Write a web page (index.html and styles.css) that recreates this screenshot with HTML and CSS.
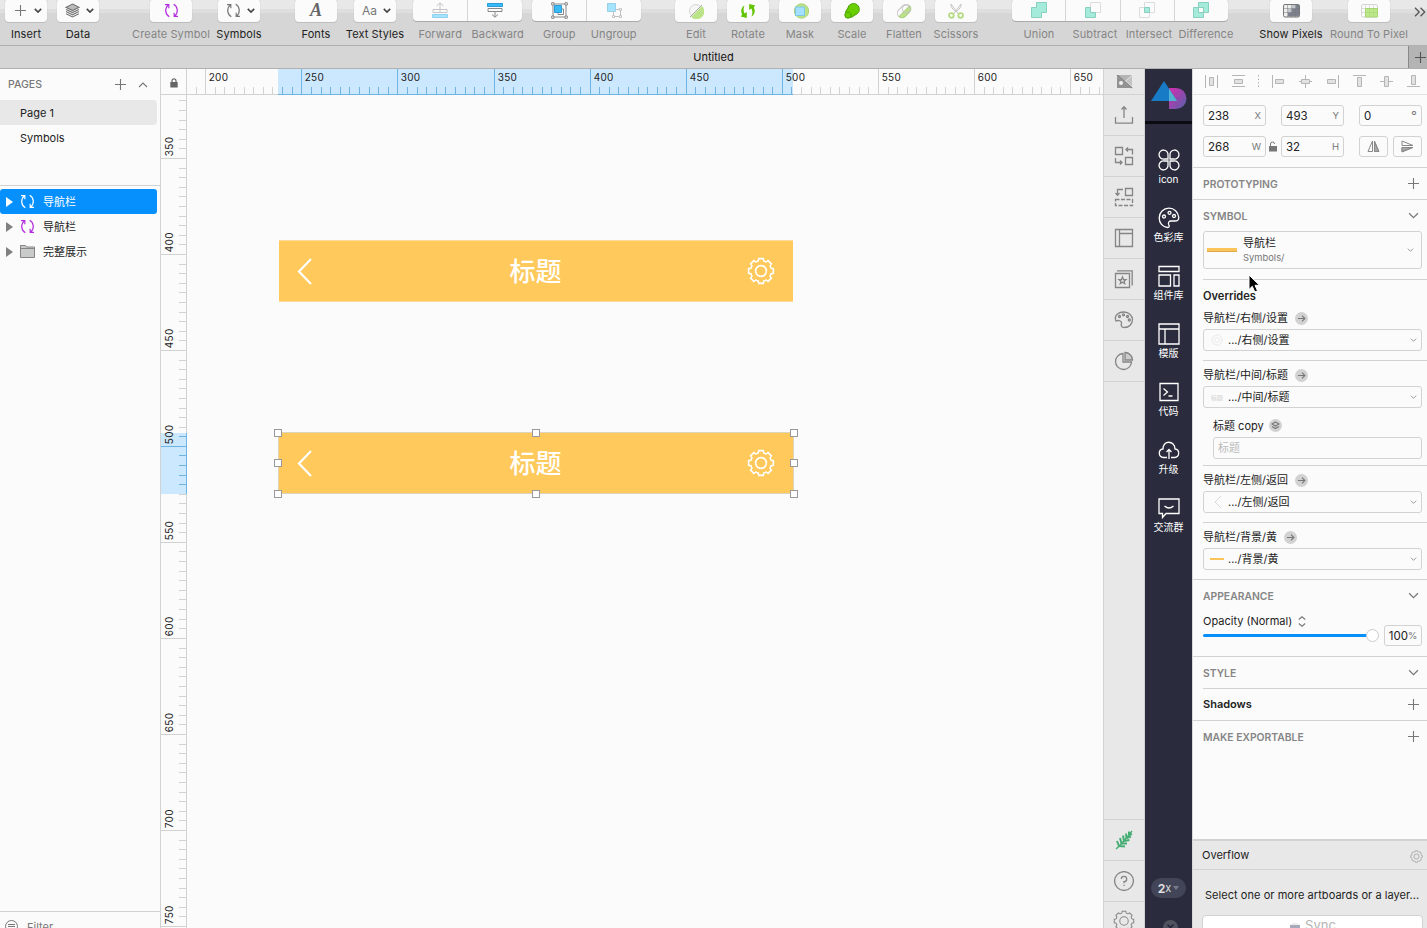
FILE: index.html
```html
<!DOCTYPE html>
<html lang="zh-CN">
<head>
    <meta charset="UTF-8">
    <meta name="viewport" content="width=device-width, initial-scale=1.0">
    <title>Untitled</title>
    <link rel="stylesheet" href="styles.css">
</head>
<body>
    <!-- Shared icons -->
    <svg class="sprite" xmlns="http://www.w3.org/2000/svg">
        <symbol id="gear" viewBox="-14 -14 28 28">
            <g id="half">
                <path id="t" d="M-4.1 -9.9Q-2.9 -9.4 -2.6 -10.6L-2.3 -12.4H2.3L2.6 -10.6Q2.9 -9.4 4.1 -9.9"/>
                <use href="#t" transform="rotate(45)"/>
                <use href="#t" transform="rotate(90)"/>
                <use href="#t" transform="rotate(135)"/>
            </g>
            <use href="#half" transform="rotate(180)"/>
            <circle r="5.4"/>
        </symbol>
        <symbol id="sync" viewBox="0 0 14 14">
            <path d="M5 12.8C1.2 10.8 .2 5.200 4 1.800M1 1.500H4.500V5M9 1.200C12.800 3.200 13.800 8.800 10 12.200M13 12.500H9.500V9"/>
        </symbol>
        <symbol id="down" viewBox="0 0 10 6"><path d="M1 1L5 5L9 1"/></symbol>
        <symbol id="plus" viewBox="0 0 11 11"><path d="M5.500 0V11M0 5.500H11"/></symbol>
        <symbol id="layers" viewBox="0 0 14 14">
            <path d="M7 1L13 4L7 7L1 4Z" fill="#bbb"/>
            <path d="M1 6L7 9L13 6M1 8L7 11L13 8M1 10L7 13L13 10"/>
        </symbol>
        <symbol id="stack" viewBox="0 0 9 9"><path d="M4.500 1L8 3L4.500 5L1 3ZM1 5.500L4.500 7.500L8 5.500"/></symbol>
        <symbol id="arrow" viewBox="0 0 13 13">
            <circle cx="6.500" cy="6.500" r="6.500" fill="#d2d2d2" stroke="none"/>
            <path d="M3 6.500H10M7 3.700L9.900 6.500L7 9.300"/>
        </symbol>
    </svg>

    <!-- Toolbar -->
    <header class="toolbar">
        <div class="tool on">
            <div class="btn with-menu"><svg class="ic g" width="11" height="11"><use href="#plus"/></svg><svg class="ic dk" width="8" height="5"><use href="#down"/></svg></div>
            <span>Insert</span>
        </div>
        <div class="tool on">
            <div class="btn with-menu"><svg class="ic g" width="15" height="15"><use href="#layers"/></svg><svg class="ic dk" width="8" height="5"><use href="#down"/></svg></div>
            <span>Data</span>
        </div>
        <div class="tool m-create">
            <div class="btn"><svg class="ic purple" width="15" height="15"><use href="#sync"/></svg></div>
            <span>Create Symbol</span>
        </div>
        <div class="tool on m-symbols">
            <div class="btn with-menu"><svg class="ic g" width="15" height="15"><use href="#sync"/></svg><svg class="ic dk" width="8" height="5"><use href="#down"/></svg></div>
            <span>Symbols</span>
        </div>
        <div class="tool on m-fonts">
            <div class="btn"><i class="font-a">A</i></div>
            <span>Fonts</span>
        </div>
        <div class="tool on m-sm">
            <div class="btn with-menu"><b class="aa">Aa</b><svg class="ic dk" width="8" height="5"><use href="#down"/></svg></div>
            <span>Text Styles</span>
        </div>
        <div class="segment m-sm">
            <div class="cells">
                <div class="cell"><svg width="16" height="16"><path d="M8 10V1M4.500 4L8 .8L11.500 4M1 7.500H15V10.500H1Z" fill="none" stroke="#c4c4c4"/><path d="M.5 12.500H15.500V15.500H.5Z" fill="#a4e4ff" stroke="#8ed0ee"/></svg></div>
                <div class="cell"><svg width="16" height="16"><path d="M.5 1.500H15.500V4.500H.5Z" fill="#39baf9" stroke="#2b9cd5"/><path d="M1 6.500H15V9.500H1ZM8 9.500V15M5 12.500L8 15.200L11 12.500" fill="none" stroke="#888"/></svg></div>
            </div>
            <div class="labels"><span>Forward</span><span class="push">Backward</span></div>
        </div>
        <div class="segment">
            <div class="cells">
                <div class="cell"><svg width="17" height="17" fill="none" stroke="#888"><path d="M2 2H15V15H2Z"/><path d="M7 7H12.500V12.500H7Z"/><path d="M3.500 3.500H10.500V10.500H3.500Z" fill="#39baf9" stroke="#2b9cd5"/><path d="M.7 .7H3V3H.7ZM14 .7H16.300V3H14ZM.7 14H3V16.300H.7ZM14 14H16.300V16.300H14Z" fill="#fff"/></svg></div>
                <div class="cell"><svg width="17" height="17" fill="none" stroke="#c2c2c2"><path d="M7.500 7.500H14.500V14.500H7.500Z"/><path d="M6.500 6.500H8.500V8.500H6.500ZM13.500 6.500H15.500V8.500H13.500ZM6.500 13.500H8.500V15.500H6.500ZM13.500 13.500H15.500V15.500H13.500Z" fill="#fff"/><path d="M1.500 1.500H9.500V9.500H1.500Z" fill="#a4e4ff" stroke="#9bcfe6"/></svg></div>
            </div>
            <div class="labels"><span>Group</span><span>Ungroup</span></div>
        </div>
        <div class="tool m-edit">
            <div class="btn"><svg width="16" height="16"><circle cx="8" cy="8" r="6.500" fill="#f6f6f6" stroke="#d5d5d5"/><path d="M14 3A7.200 7.200 0 0 1 3 14Z" fill="#bde388"/><path d="M2 14L14 2" stroke="#aaa"/></svg></div>
            <span>Edit</span>
        </div>
        <div class="tool">
            <div class="btn"><svg width="16" height="16" fill="#62c400"><path d="M4.500 2.500C1 4.500 .5 8.500 2.200 11.500L.8 13.500L6.800 15V9L4.500 10.500C3.300 8 3.300 5 4.500 2.500ZM11.500 13.500C15 11.500 15.500 7.500 13.800 4.500L15.200 2.500L9.200 1V7L11.500 5.500C12.700 8 12.700 11 11.500 13.500Z"/></svg></div>
            <span>Rotate</span>
        </div>
        <div class="tool">
            <div class="btn"><svg width="17" height="16"><circle cx="9.500" cy="8" r="7.200" fill="#bde388" stroke="#a9d178"/><path d="M3.500 4H12.500V12.500H3.500Z" fill="#a4e0ff" stroke="#7fc5e4"/></svg></div>
            <span>Mask</span>
        </div>
        <div class="tool">
            <div class="btn"><svg width="16" height="16" fill="#69cf00" stroke="#4b9f0b"><circle cx="9.500" cy="6.300" r="5.800"/><circle cx="6.500" cy="9.500" r="4.800"/><circle cx="4" cy="12" r="3.200"/><circle cx="9.500" cy="6.300" r="5" stroke="none"/></svg></div>
            <span>Scale</span>
        </div>
        <div class="tool">
            <div class="btn"><svg width="16" height="16" fill="none"><g transform="rotate(-45 8 8)" stroke="#c6c6c6"><rect x=".5" y="3.500" width="15" height="9" rx="4.500"/><path d="M1 8.500H15.500Q15 12.500 11 12.500H5Q1 12.500 1 8.500Z" fill="#bde388" stroke="#a9d178"/><circle cx="11" cy="8" r="3.800"/></g></svg></div>
            <span>Flatten</span>
        </div>
        <div class="tool">
            <div class="btn"><svg width="16" height="16" fill="none" stroke="#c4c4c4"><path d="M3 1L10.500 11M13 1L5.500 11M3 1Q2 4 8 9M13 1Q14 4 8 9"/><g stroke="#b4db80" stroke-width="1.800"><circle cx="3.400" cy="12.500" r="2.300"/><circle cx="12.600" cy="12.500" r="2.300"/></g></svg></div>
            <span>Scissors</span>
        </div>
        <div class="segment bool">
            <div class="cells">
                <div class="cell"><svg width="16" height="16"><path d="M5.500 .5H15.500V10.500H10.500V15.500H.5V5.500H5.500Z" fill="#a5ebdc" stroke="#88cfc0"/></svg></div>
                <div class="cell"><svg width="16" height="16"><path d="M5.500 .5H15.500V10.500H5.500Z" fill="none" stroke="#ddd"/><path d="M.5 5.500H5.500V10.500H10.500V15.500H.5Z" fill="#a5ebdc" stroke="#88cfc0"/></svg></div>
                <div class="cell"><svg width="16" height="16"><path d="M5.500 .5H15.500V10.500H5.500ZM.5 5.500H10.500V15.500H.5Z" fill="none" stroke="#ddd"/><path d="M5.500 5.500H10.500V10.500H5.500Z" fill="#a5ebdc" stroke="#88cfc0"/></svg></div>
                <div class="cell"><svg width="16" height="16"><path d="M5.500 .5H15.500V10.500H10.500V15.500H.5V5.500H5.500Z" fill="#a5ebdc" stroke="#88cfc0"/><path d="M5.500 5.500H10.500V10.500H5.500Z" fill="#fbfbfb" stroke="#88cfc0"/></svg></div>
            </div>
            <div class="labels"><span>Union</span><span class="nudge">Subtract</span><span class="nudge">Intersect</span><span class="push-more">Difference</span></div>
        </div>
        <div class="tool on m-pixels">
            <div class="btn"><svg width="17" height="14"><rect x=".5" y=".5" width="16" height="12.500" rx="1.500" fill="#eee"/><path d="M9 1H13V4.500H9ZM5 5H9V8.500H5Z" fill="#c2c6cf"/><path d="M9 4.500H16V12.500H5V8.500H9ZM13 1H16V4.500H13Z" fill="#7d818f"/><path d="M4.500 .5V13M8.500 .5V13M12.500 .5V13M.5 4.500H16.500M.5 8.500H16.500" stroke="#777" stroke-opacity=".5"/><rect x=".5" y=".5" width="16" height="12.500" rx="1.500" fill="none" stroke="#777"/></svg></div>
            <span>Show Pixels</span>
        </div>
        <div class="tool m-round">
            <div class="btn"><svg width="17" height="14"><rect x=".5" y=".5" width="16" height="12.500" rx="1.500" fill="#fbfbfb" stroke="#d4d4d4"/><path d="M4.500 4.500H16.500V13H4.500Z" fill="#bce88a" stroke="#a8d474"/><path d="M4.500 .5V4M8.500 .5V4M12.500 .5V4M.5 4.500H4M.5 8.500H4" stroke="#ddd"/><path d="M8.500 5V13M12.500 5V13M5 8.500H16" stroke="#a8d474" stroke-opacity=".5"/></svg></div>
            <span>Round To Pixel</span>
        </div>
        <svg class="more" width="12" height="10" fill="none" stroke="#555" stroke-width="1.300"><path d="M1 .8L5.200 5L1 9.200M6.500 .8L10.700 5L6.500 9.200"/></svg>
    </header>

    <div class="tabbar">
        <span class="tab">Untitled</span>
        <span class="new-tab"><svg class="ic" width="11" height="11"><use href="#plus"/></svg></span>
    </div>

    <main class="workspace">
        <!-- Pages and layers -->
        <aside class="sidebar">
            <div class="pages">
                <div class="pages-head">
                    <span>PAGES</span>
                    <svg class="ic g" width="11" height="11"><use href="#plus"/></svg>
                    <svg class="ic g flip" width="10" height="6"><use href="#down"/></svg>
                </div>
                <div class="page current">Page 1</div>
                <div class="page">Symbols</div>
            </div>
            <div class="layers">
                <div class="layer selected"><i class="tri"></i><svg class="ic" width="15" height="15"><use href="#sync"/></svg><span>导航栏</span></div>
                <div class="layer"><i class="tri"></i><svg class="ic purple" width="15" height="15"><use href="#sync"/></svg><span>导航栏</span></div>
                <div class="layer"><i class="tri"></i><svg width="15" height="13"><path d="M.5 .5H5.500L6.500 2H14.500V12.500H.5Z" fill="#c9caca" stroke="#858585"/><path d="M.5 3.500H14.500" stroke="#858585"/></svg><span>完整展示</span></div>
            </div>
            <div class="filter"><svg width="13" height="13" fill="none" stroke="#777"><circle cx="6.500" cy="6.500" r="6"/><path d="M3 4.500H10M3 6.500H10M4 8.500H9"/></svg><span>Filter</span></div>
        </aside>

        <!-- Canvas with rulers -->
        <section class="editor">
            <div class="corner"><svg width="8" height="10"><path d="M2 4V2.800A2 2 0 0 1 6 2.800V4" fill="none" stroke="#666" stroke-width="1.200"/><rect x=".3" y="4" width="7.400" height="5.500" rx=".6" fill="#666"/></svg></div>
            <svg class="ruler" id="rulerX" width="916" height="26"></svg>
            <svg class="ruler" id="rulerY" width="26" height="833"></svg>
            <div class="canvas">
                <div class="artwork top">
                    <svg width="15" height="28"><path d="M14 2L2 14.500L14 27"/></svg>
                    <span>标题</span>
                    <svg width="28" height="28"><use href="#gear"/></svg>
                </div>
                <div class="artwork bottom">
                    <svg width="15" height="28"><path d="M14 2L2 14.500L14 27"/></svg>
                    <span>标题</span>
                    <svg width="28" height="28"><use href="#gear"/></svg>
                    <i class="handle n w"></i><i class="handle n c"></i><i class="handle n e"></i>
                    <i class="handle m w"></i><i class="handle m e"></i>
                    <i class="handle s w"></i><i class="handle s c"></i><i class="handle s e"></i>
                </div>
            </div>
        </section>

        <!-- Plugin strip -->
        <nav class="strip">
            <div class="slot first"><svg width="17" height="14"><path d="M1 0H16L9 6Z" fill="#b4b4b4"/><path d="M1 1L15 13H1Z" fill="#929292"/><path d="M16 1V11L10 6Z" fill="#c2c2c2"/><circle cx="5" cy="8" r="2" fill="#f0f0f0"/><path class="slash" d="M1 0L16 13"/></svg></div>
            <div class="slot"><svg width="20" height="20"><path d="M1.500 12V18.200H18.500V12M10 13V2M7.500 4.500L10 1.800L12.500 4.500"/></svg></div>
            <div class="slot"><svg width="20" height="20"><path d="M1.500 1.500H8.500V8.500H1.500ZM11.500 11.500H18.500V18.500H11.500ZM18.500 8.500V3.500H12M14 1.500L12 3.500L14 5.500M1.500 12V16.500H8M6 14.500L8 16.500L6 18.500"/></svg></div>
            <div class="slot"><svg width="20" height="20"><path d="M11.500 1.500H18.500V8.500H11.500ZM9 2.500H3.500V8M1.500 6L3.500 8.200L5.500 6"/><path d="M1.500 12.500H18.500V18.500H1.500Z" stroke-dasharray="4 1.500"/></svg></div>
            <div class="slot"><svg width="20" height="20"><path d="M1.500 1.500H18.500V18.500H1.500ZM5.500 1.500V18.500M5.500 5.500H18.500"/></svg></div>
            <div class="slot"><svg width="20" height="20"><path d="M1.500 4.500H15.500V18.500H1.500ZM3 1.800H18.200V16.500M8.500 8L9.500 10.500L12 10.600L10.100 12.200L10.700 14.700L8.500 13.300L6.300 14.700L6.900 12.200L5 10.600L7.500 10.500Z"/></svg></div>
            <div class="slot"><svg width="20" height="20"><path d="M2 11C-.5 5 5 2 10 2C15 2 18.500 6 18.500 9.500C18.500 14 15 17.500 10.500 17.500C7 17.500 7 15.500 7.500 13.500C8 10.500 4 10 2 11Z"/><circle cx="5.500" cy="6.500" r="1"/><circle cx="9.500" cy="4.800" r="1"/><circle cx="13.500" cy="6.500" r="1"/><circle cx="15.300" cy="10" r="1"/></svg></div>
            <div class="slot"><svg width="20" height="20"><path d="M9 2.500A8 8 0 1 0 17.500 11H9Z"/><path d="M11 1.500V9H18.500A7.500 7.500 0 0 0 11 1.500Z" fill="#ccc"/></svg></div>
            <div class="fill"></div>
            <div class="slot leaf"><svg width="20" height="22"><path d="M2 20Q8 15 18 2" stroke-width="1.300"/><path d="M5 17L3 12M7.500 14.500L6 9M10 12L9 6.500M12.500 9L12 4.500M15 6L15 2.500M5 17L11 17.500M7.500 14.500L13 14.500M10 12L15.500 11M12.500 9L17 7.500M15 6L18 5" stroke-width="2"/></svg></div>
            <div class="slot"><svg width="20" height="20"><circle cx="10" cy="10" r="9.400"/><path d="M7.300 8A2.700 2.700 0 1 1 10 10.700V12.300M10 13.800V15"/></svg></div>
            <div class="slot last"><svg width="22" height="22"><use href="#gear"/></svg></div>
        </nav>

        <!-- Library dock -->
        <nav class="dock">
            <div class="logo"><svg width="36" height="30"><defs><linearGradient id="lg" x1="0" y1="0" x2="1" y2="1"><stop offset="0" stop-color="#d62bb2"/><stop offset="1" stop-color="#5264a8"/></linearGradient></defs><path d="M18 7H25A10.500 10.500 0 0 1 25 28H18Z" fill="url(#lg)"/><path d="M13 0L26 20H0Z" fill="#187bc6"/><path d="M18 7.500L26 20H18Z" fill="#4eb4cf"/></svg></div>
            <div class="entry"><svg width="22" height="22"><path d="M10 10H6A4.500 4.500 0 1 1 10 6ZM12 10V6A4.500 4.500 0 1 1 16 10ZM10 12V16A4.500 4.500 0 1 1 6 12ZM12 12H16A4.500 4.500 0 1 1 12 16Z"/></svg><span>icon</span></div>
            <div class="entry"><svg width="22" height="22"><path d="M11 1.200C5.500 1.200 1.200 5.500 1.200 11C1.200 16 4.500 20 9.500 20.500C11.500 20.500 11.500 19 10.700 17.500C9.900 15.500 11 14 13 14H17C20 14 20.800 12 20.800 10.500C20.300 5 16 1.200 11 1.200Z"/><circle cx="6" cy="9.500" r="1.500"/><circle cx="11.500" cy="5.800" r="1.500"/><circle cx="16" cy="9" r="1.500"/></svg><span>色彩库</span></div>
            <div class="entry"><svg width="22" height="22"><path d="M1 1.500H21V6.500H1ZM1 10H12.500V21H1ZM16 10H21V21H16Z"/></svg><span>组件库</span></div>
            <div class="entry"><svg width="22" height="22"><path d="M1 1H21V21H1ZM1 6H21M7 6V21"/></svg><span>模版</span></div>
            <div class="entry"><svg width="22" height="22"><path d="M2 2.500H20V19.500H2ZM5.500 7.500L9.500 11L5.500 14.500M10.500 15H14.500"/></svg><span>代码</span></div>
            <div class="entry"><svg width="22" height="22"><path d="M9 18.500H5.500C0 18 0 10.500 5 10C4.500 1 17 1 17 10C22 10.500 22 18 16.500 18.500H13M11 20V10.500M8.500 13L11 10.500L13.500 13"/></svg><span>升级</span></div>
            <div class="entry"><svg width="22" height="22"><path d="M1 2H21V16.500H8L4.500 20.500V16.500H1ZM6.500 9Q11 13 15.500 9"/></svg><span>交流群</span></div>
            <div class="scale"><b>2</b>x<i></i></div>
            <div class="close"><svg width="15" height="15"><circle cx="7.500" cy="7.500" r="7.500" fill="#50525f"/><path d="M4.500 4.500L10.500 10.500M10.500 4.500L4.500 10.500" stroke="#23243a" stroke-width="1.500"/></svg></div>
        </nav>

        <!-- Inspector -->
        <aside class="inspector">
            <div class="align">
                <svg width="14" height="14"><path d="M1.500 1V14M13.500 1V14"/><path class="f" d="M5.500 3.500H9.500V11.500H5.500Z"/></svg>
                <svg width="14" height="14"><path d="M1 1.500H14M1 12.500H14"/><path class="f" d="M3.500 5.500H11.500V9.500H3.500Z"/></svg>
                <svg class="dots" width="3" height="14"><path d="M1.500 1V14" stroke-dasharray="1.500 2"/></svg>
                <svg class="after-dots" width="14" height="14"><path d="M1.500 1V14"/><path class="f" d="M4.500 5.500H12.500V9.500H4.500Z"/></svg>
                <svg width="14" height="14"><path d="M7.500 1V14M1 7.500H14"/><path class="f" d="M3.500 5.500H11.500V9.500H3.500Z"/></svg>
                <svg width="14" height="14"><path d="M13.500 1V14"/><path class="f" d="M2.500 5.500H10.500V9.500H2.500Z"/></svg>
                <svg width="14" height="14"><path d="M1 1.500H14"/><path class="f" d="M5.500 3.500H9.500V12.500H5.500Z"/></svg>
                <svg width="14" height="14"><path d="M1 7.500H14"/><path class="f" d="M5.500 2.500H9.500V12.500H5.500Z"/></svg>
                <svg width="14" height="14"><path d="M1 12.500H14"/><path class="f" d="M5.500 1.500H9.500V10.500H5.500Z"/></svg>
            </div>
            <div class="geometry">
                <div class="field">238<em>X</em></div>
                <div></div>
                <div class="field">493<em>Y</em></div>
                <div></div>
                <div class="field">0<em class="deg">°</em></div>
                <div class="field">268<em>W</em></div>
                <div class="lock"><svg width="8" height="11"><path d="M1.500 5V3A2 2 0 0 1 5.500 3" fill="none" stroke="#777"/><rect y="5" width="8" height="5.500" fill="#777"/></svg></div>
                <div class="field">32<em>H</em></div>
                <div></div>
                <div class="flips">
                    <div><svg width="13" height="13" fill="none" stroke="#888"><path d="M5.500 1V11.500H1ZM7.500 1V11.500H12Z"/><path d="M7.500 2V11.500H11.500Z" fill="#aaa"/></svg></div>
                    <div><svg width="13" height="13" fill="none" stroke="#888"><path d="M1 1V5.500H12ZM1 7.500H12L1 12Z"/><path d="M1 7.500H11L1 11.500Z" fill="#aaa"/></svg></div>
                </div>
            </div>
            <div class="head line"><span>PROTOTYPING</span><svg class="ic g" width="11" height="11"><use href="#plus"/></svg></div>
            <div class="head"><span>SYMBOL</span><svg class="ic g" width="11" height="7"><use href="#down"/></svg></div>
            <div class="symbol-box">
                <i class="thumb"></i>
                <div class="symbol-name">导航栏<small>Symbols/</small></div>
                <svg class="ic g" width="7" height="4"><use href="#down"/></svg>
            </div>
            <div class="rule"></div>
            <h3>Overrides</h3>
            <div class="override">
                <label><span>导航栏/右侧/设置</span><svg class="ic g" width="13" height="13"><use href="#arrow"/></svg></label>
                <div class="select"><svg class="pale" width="12" height="12"><use href="#gear"/></svg><span>.../右侧/设置</span><svg class="ic g" width="7" height="4"><use href="#down"/></svg></div>
            </div>
            <div class="rule"></div>
            <div class="override with-text">
                <label><span>导航栏/中间/标题</span><svg class="ic g" width="13" height="13"><use href="#arrow"/></svg></label>
                <div class="select"><i class="tiny">标题</i><span>.../中间/标题</span><svg class="ic g" width="7" height="4"><use href="#down"/></svg></div>
                <div class="sub">
                    <label><span>标题 copy</span><i class="dot"><svg class="ic g" width="9" height="9"><use href="#stack"/></svg></i></label>
                    <div class="placeholder"><span>标题</span></div>
                </div>
            </div>
            <div class="rule"></div>
            <div class="override">
                <label><span>导航栏/左侧/返回</span><svg class="ic g" width="13" height="13"><use href="#arrow"/></svg></label>
                <div class="select"><svg class="pale" width="12" height="12"><path d="M10 0L4 6L10 12"/></svg><span>.../左侧/返回</span><svg class="ic g" width="7" height="4"><use href="#down"/></svg></div>
            </div>
            <div class="rule"></div>
            <div class="override">
                <label><span>导航栏/背景/黄</span><svg class="ic g" width="13" height="13"><use href="#arrow"/></svg></label>
                <div class="select"><i class="yellow"></i><span>.../背景/黄</span><svg class="ic g" width="7" height="4"><use href="#down"/></svg></div>
            </div>
            <div class="rule full"></div>
            <div class="head"><span>APPEARANCE</span><svg class="ic g" width="11" height="7"><use href="#down"/></svg></div>
            <div class="opacity">
                <div class="opacity-main">
                    <div class="opacity-label">Opacity (Normal)<svg class="ic g" width="8" height="11" viewBox="0 0 8 11"><path d="M.8 3.500L4 .8L7.200 3.500M.8 7.500L4 10.200L7.200 7.500"/></svg></div>
                    <div class="slider"><i></i></div>
                </div>
                <div class="percent">100<small>%</small></div>
            </div>
            <div class="rule full"></div>
            <div class="head"><span>STYLE</span><svg class="ic g" width="11" height="7"><use href="#down"/></svg></div>
            <div class="rule"></div>
            <div class="head line dark"><span>Shadows</span><svg class="ic g" width="11" height="11"><use href="#plus"/></svg></div>
            <div class="head"><span>MAKE EXPORTABLE</span><svg class="ic g" width="11" height="11"><use href="#plus"/></svg></div>

            <div class="overflow">
                <div class="overflow-head">Overflow<svg width="13" height="13"><use href="#gear"/></svg></div>
                <p>Select one or more artboards or a layer...</p>
                <div class="sync"><svg width="12" height="12"><path d="M1 5Q6 0 11 5Z" fill="#eee"/><path d="M1 5H11V9H1Z" fill="#a6aabb"/></svg>Sync</div>
            </div>
        </aside>
    </main>

    <svg class="cursor" width="14" height="20"><path d="M1 1V15.500L4.300 12.300L6.800 18L9.500 16.800L7 11.300H11.500Z" fill="#000" stroke="#fff"/></svg>

    <script src="ruler.js"></script>
</body>
</html>
```

FILE: styles.css
```css
/* General */
* {
    box-sizing: border-box;
}

body {
    margin: 0;
    height: 928px;
    display: flex;
    flex-direction: column;
    overflow: hidden;
    font-family: Inter, "Noto Sans CJK SC", sans-serif;
    font-size: 11px;
    color: #222;
    background: #fbfbfb;
}

svg {
    flex: none;
}

.sprite {
    position: absolute;
    width: 0;
    height: 0;
}

.ic {
    fill: none;
    stroke: currentColor;
    stroke-width: 1.1;
}

.g {
    color: #777;
}

.dk {
    color: #444;
    stroke-width: 2;
}

.purple {
    color: #b52be0;
}

.flip {
    transform: scaleY(-1);
}

/* Toolbar */
.toolbar {
    flex: none;
    height: 46px;
    display: flex;
    gap: 10px;
    padding-left: 5px;
    background: linear-gradient(#e8e8e8 9px, #dedede 9px, #dedede 13px, #d6d6d6 13px);
    border-bottom: 1px solid #b0b0b0;
}

.tool {
    width: 42px;
    flex: none;
    display: flex;
    flex-direction: column;
    align-items: center;
    color: #858585;
    white-space: nowrap;
}

.tool.on {
    color: #222;
}

.tool > span,
.labels {
    line-height: 14px;
    margin-top: 5px;
    letter-spacing: 0.1px;
}

.btn {
    width: 42px;
    height: 23px;
    margin-top: -1px;
    display: flex;
    align-items: center;
    justify-content: center;
    background: #fbfbfb;
    border-radius: 4px;
    box-shadow: 0 1px 0 #bdbdbd, 0 0 1px #aaa;
}

.with-menu {
    justify-content: space-between;
    padding: 0 5px 0 8px;
}

.with-menu .g[width="11"] {
    margin-left: 2px;
}

.m-create { margin-left: 41px; }
.m-symbols { margin-left: 16px; }
.m-fonts { margin-left: 25px; }
.m-sm { margin-left: 7px; }
.m-edit { margin-left: 24px; }
.m-pixels { margin-left: 32px; }
.m-round { margin-left: 26px; }

.font-a {
    font: italic bold 18px "Liberation Serif", serif;
    color: #666;
}

.aa {
    font-size: 12px;
    font-weight: 400;
    color: #777;
}

.segment {
    width: 109px;
    flex: none;
    color: #858585;
}

.segment.bool {
    width: 216px;
    margin-left: 25px;
}

.cells {
    height: 22px;
    margin-top: -1px;
    display: flex;
    background: #fbfbfb;
    border-radius: 4px;
    box-shadow: 0 1px 0 #aaa, 0 0 1px #aaa;
}

.cell {
    flex: 1;
    display: flex;
    align-items: center;
    justify-content: center;
}

.cell + .cell {
    border-left: 1px solid #d6d6d6;
}

.labels {
    display: flex;
    margin-top: 6px;
}

.labels span {
    flex: 1 1 0;
    width: 0;
    display: flex;
    justify-content: center;
}

/* margins are taken back on the right so the columns keep their width */
.labels .nudge { margin: 0 -2px 0 2px; }
.labels .push { margin: 0 -3px 0 3px; }
.labels .push-more { margin: 0 -5px 0 5px; }

.more {
    margin: 7px 0 0 14px;
}

/* Tab bar */
.tabbar {
    flex: none;
    height: 23px;
    display: flex;
    background: #d6d6d6;
    border-bottom: 1px solid #b0b0b0;
}

.tab {
    flex: 1;
    padding-left: 19px;
    text-align: center;
    line-height: 23px;
    color: #111;
}

.new-tab {
    width: 19px;
    padding: 6px 0 0 6px;
    overflow: hidden;
    background: #b4b4b4;
    border-left: 1px solid #888;
    color: #555;
}

/* Workspace */
.workspace {
    flex: 1;
    min-height: 0;
    display: grid;
    grid-template-columns: 161px 942px 42px 47px 235px;
    grid-template-rows: 859px;
}

/* Sidebar */
.sidebar {
    display: flex;
    flex-direction: column;
    border-right: 1px solid #d2d2d2;
    overflow: hidden;
}

.pages {
    height: 117px;
    border-bottom: 1px solid #d2d2d2;
}

.pages-head {
    height: 31px;
    display: flex;
    align-items: center;
    gap: 12px;
    padding: 0 12px 0 8px;
    color: #777;
}

.pages-head span {
    flex: 1;
    font-size: 10.5px;
    font-weight: 500;
}

.page {
    width: 157px;
    height: 25px;
    padding-left: 20px;
    line-height: 26px;
}

.current {
    background: #e8e8e8;
    border-radius: 0 4px 4px 0;
}

.layers {
    flex: 1;
    padding-top: 3px;
}

.layer {
    width: 157px;
    height: 25px;
    display: flex;
    align-items: center;
    padding-left: 6px;
    border-radius: 3px;
}

.layer span {
    padding-bottom: 1px;
}

.layer svg {
    margin: 0 8px 0 7px;
}

.selected {
    background: #0690fe;
    color: #fff;
}

.tri {
    border-left: 7px solid #808080;
    border-top: 5px solid transparent;
    border-bottom: 5px solid transparent;
}

.selected .tri {
    border-left-color: #fff;
}

.filter {
    height: 17px;
    display: flex;
    gap: 9px;
    padding: 8px 0 0 5px;
    border-top: 1px solid #d2d2d2;
    color: #777;
}

/* Rulers and canvas */
.editor {
    display: grid;
    grid-template-columns: 26px 916px;
    grid-template-rows: 26px 833px;
    overflow: hidden;
}

.corner {
    display: flex;
    align-items: center;
    justify-content: center;
    padding: 2px 0 0 1px;
    border-right: 1px solid #d2d2d2;
    border-bottom: 1px solid #d2d2d2;
}

.ruler {
    display: block;
    overflow: hidden;
    font-size: 10px;
    letter-spacing: 0.3px;
    shape-rendering: crispEdges;
}

.canvas {
    position: relative;
}

.artwork {
    position: absolute;
    left: 92px;
    width: 514px;
    height: 60px;
    display: flex;
    align-items: center;
    justify-content: space-between;
    padding: 0 18px;
    background: #ffc95c;
    color: #fff;
    font-size: 26px;
    font-weight: 500;
}

.artwork.top {
    top: 146px;
    box-shadow: 0 -1px 0 #fddc9a, 0 1px 0 #fddc9a;
}

.artwork.bottom {
    top: 338px;
    box-shadow: 0 0 0 1px #ddd3bd;
}

.artwork span {
    padding-bottom: 3px;
}

.artwork svg {
    fill: none;
    stroke: #fff;
    stroke-width: 1.6;
}

.artwork svg:first-child {
    margin-right: 12px;
    stroke-width: 2.2;
}

.handle {
    position: absolute;
    width: 8px;
    height: 8px;
    background: #fff;
    border: 1px solid #999;
}

.n { top: -4px; }
.m { top: 26px; }
.s { top: 57px; }
.w { left: -5px; }
.c { left: 253px; }
.e { left: 511px; }

/* Plugin strip */
.strip {
    display: flex;
    flex-direction: column;
    background: #e8e8e8;
    border-left: 1px solid #d2d2d2;
    border-right: 1px solid #d2d2d2;
    overflow: hidden;
}

.slot {
    flex: none;
    height: 41px;
    display: flex;
    align-items: center;
    justify-content: center;
    border-bottom: 1px solid #d2d2d2;
}

.slot svg {
    fill: none;
    stroke: #858585;
    stroke-width: 1.3;
}

.slot.first {
    height: 26px;
    padding-top: 1px;
}

.slot.first svg {
    stroke: none;
}

.slot .slash {
    stroke: #808080;
    stroke-width: 1.5;
}

.fill {
    flex: 1;
    border-bottom: 1px solid #d2d2d2;
}

.slot.leaf svg {
    stroke: #45ad73;
}

.slot.last {
    height: 26px;
    padding-top: 11px;
    border: 0;
}

/* Dock */
.dock {
    display: flex;
    flex-direction: column;
    align-items: center;
    background: #2a2b3c;
    color: #fff;
    overflow: hidden;
}

.logo {
    width: 47px;
    height: 55px;
    flex: none;
    padding: 12px 0 0 6px;
    border-bottom: 3px solid #0b0b14;
    margin-bottom: 25px;
}

.entry {
    height: 58px;
    flex: none;
    display: flex;
    flex-direction: column;
    align-items: center;
    font-size: 10px;
    line-height: 16px;
}

.entry svg {
    fill: none;
    stroke: #fff;
    stroke-width: 1.3;
}

.scale {
    width: 35px;
    height: 20px;
    flex: none;
    margin-top: auto;
    display: flex;
    align-items: center;
    justify-content: center;
    border-radius: 10px;
    background: #424558;
    color: #ddd;
}

.scale b {
    font-size: 12px;
}

.scale i {
    margin-left: 2px;
    border-top: 4px solid #777b8a;
    border-left: 3px solid transparent;
    border-right: 3px solid transparent;
}

.close {
    height: 8px;
    margin: 22px 0 0 3px;
    flex: none;
}

/* Inspector */
.inspector {
    display: flex;
    flex-direction: column;
    border-left: 1px solid #d8d8d8;
    overflow: hidden;
}

.align {
    height: 26px;
    flex: none;
    display: flex;
    align-items: center;
    padding: 0 0 1px 11px;
    border-bottom: 1px solid #e2e2e2;
}

.align svg {
    fill: none;
    stroke: #b5b5b5;
    margin-left: 13px;
}

.align svg:first-child {
    margin-left: 0;
}

.align .f {
    fill: #e2e2e2;
}

.align .dots { margin-left: 12px; }
.align .after-dots { margin-left: 11px; }

.geometry {
    height: 73px;
    flex: none;
    display: grid;
    grid-template-columns: 63px 15px 63px 15px 63px;
    grid-auto-rows: 21px;
    row-gap: 10px;
    padding: 10px 0 0 10px;
    border-bottom: 1px solid #d2d2d2;
}

.field,
.flips div,
.symbol-box,
.select,
.placeholder,
.percent {
    border: 1px solid #d2d2d2;
    border-radius: 3px;
    display: flex;
    align-items: center;
}

.field {
    justify-content: space-between;
    padding: 0 4px;
    font-size: 11.5px;
}

.field em {
    font-style: normal;
    font-size: 9.5px;
    color: #777;
}

.field .deg {
    font-size: 13px;
}

.lock {
    display: flex;
    align-items: center;
    justify-content: center;
    padding-right: 1px;
}

.flips {
    display: flex;
    gap: 5px;
}

.flips div {
    flex: 1;
    justify-content: center;
}

.head {
    height: 31px;
    flex: none;
    display: flex;
    align-items: center;
    justify-content: space-between;
    padding: 0 8px 0 10px;
    font-size: 10.35px;
    font-weight: 600;
    color: #858585;
}

.head.line {
    height: 32px;
    border-bottom: 1px solid #d2d2d2;
}

.head.dark {
    padding-bottom: 1px;
    color: #222;
    font-size: 11px;
}

.symbol-box {
    height: 38px;
    flex: none;
    margin: 0 5px 10px 10px;
    padding: 0 7px 0 3px;
}

.thumb {
    width: 30px;
    height: 4px;
    background: #fbc45a;
    border-bottom: 1px solid #dba948;
}

.symbol-name {
    flex: 1;
    margin-left: 6px;
    line-height: 15px;
}

.symbol-name small {
    display: block;
    font-size: 9.4px;
    line-height: 14px;
    color: #777;
}

.rule {
    height: 1px;
    flex: none;
    margin-left: 10px;
    background: #d2d2d2;
}

.rule.full {
    margin-left: 0;
}

h3 {
    height: 24px;
    flex: none;
    margin: 0;
    padding: 7px 0 0 10px;
    font-size: 11.1px;
    line-height: 18px;
    font-weight: 600;
}

.override {
    flex: none;
    padding: 5px 5px 9px 10px;
}

.override label {
    height: 20px;
    display: flex;
    align-items: center;
    gap: 7px;
    padding-bottom: 2px;
}

.override label span,
.select span,
.placeholder span {
    padding-bottom: 2px;
}

.select {
    height: 22px;
    padding: 0 4px 0 7px;
}

.select span {
    flex: 1;
    margin-left: 5px;
}

.pale {
    fill: none;
    stroke: #d8d8d8;
}

.tiny {
    width: 12px;
    font: 700 6px "Noto Sans CJK SC", sans-serif;
    color: #ddd;
}

.yellow {
    width: 14px;
    height: 2px;
    margin-left: -1px;
    margin-right: -1px;
    background: #fbc45a;
}

.with-text {
    padding-bottom: 6px;
}

.sub {
    padding: 6px 0 0 10px;
}

.sub label {
    height: 23px;
    gap: 5px;
    padding-bottom: 1px;
}

.sub label span {
    padding-bottom: 0;
}

.dot {
    width: 13px;
    height: 13px;
    display: flex;
    align-items: center;
    justify-content: center;
    border-radius: 50%;
    background: #d2d2d2;
}

.placeholder {
    height: 22px;
    padding-left: 4px;
    color: #bbb;
}

.opacity {
    height: 45px;
    flex: none;
    display: flex;
    gap: 5px;
    padding: 0 5px 0 10px;
}

.opacity-main {
    flex: 1;
}

.opacity-label {
    height: 20px;
    display: flex;
    align-items: center;
    gap: 6px;
}

.slider {
    height: 3px;
    margin-top: 3px;
    margin-right: 6px;
    background: #0690fe;
    border-radius: 2px;
    display: flex;
    align-items: center;
    justify-content: flex-end;
}

.slider i {
    width: 13px;
    height: 13px;
    flex: none;
    margin-right: -6px;
    border: 1px solid #ccc;
    border-radius: 50%;
    background: #fff;
}

.percent {
    width: 38px;
    height: 21px;
    margin-top: 14px;
    justify-content: center;
    font-size: 11.5px;
}

.percent small {
    font-size: 9.5px;
    color: #777;
}

/* Overflow panel */
.overflow {
    height: 89px;
    flex: none;
    margin-top: auto;
    border-top: 2px solid #d2d2d2;
    background: #e8e8e8;
}

.overflow-head {
    height: 29px;
    display: flex;
    align-items: center;
    justify-content: space-between;
    padding: 0 4px 0 9px;
    border-bottom: 1px solid #d2d2d2;
}

.overflow-head svg {
    fill: none;
    stroke: #aaa;
    stroke-width: 2;
    margin-top: 3px;
}

.overflow p {
    height: 45px;
    margin: 0;
    padding: 5px 0 0 12px;
    line-height: 40px;
    letter-spacing: 0.05px;
    white-space: nowrap;
}

.sync {
    height: 30px;
    margin: 0 4px 0 9px;
    display: flex;
    justify-content: center;
    align-items: flex-start;
    gap: 4px;
    padding-top: 1px;
    font-size: 13px;
    line-height: 17px;
    color: #b5b5b5;
    background: #fff;
    border: 1px solid #d2d2d2;
    border-radius: 4px;
}

.sync svg {
    margin-top: 3px;
}

/* Pointer */
.cursor {
    position: absolute;
    left: 1248px;
    top: 274px;
}
```

FILE: ruler.js
```javascript
const NS = "http://www.w3.org/2000/svg";

function add(svg, name, attrs, text) {
    const el = document.createElementNS(NS, name);
    for (const key in attrs) el.setAttribute(key, attrs[key]);
    if (text !== undefined) el.textContent = text;
    svg.appendChild(el);
}

// origin: pixel of the first major tick, from/to: selected range in pixels
function drawRuler(id, vertical, first, origin, scale, length, from, to) {
    const svg = document.getElementById(id);
    const box = (a, b, w, h, fill) => add(svg, "rect", vertical
        ? { x: b, y: a, width: h, height: w, fill: fill }
        : { x: a, y: b, width: w, height: h, fill: fill });

    box(from, 0, to - from, 26, "#cce8fe");
    box(0, 25, length, 1, "#d2d2d2");
    box(from, 25, to - from, 1, "#6fb3e3");

    for (let i = -6; ; i++) {
        const pos = Math.floor(origin + i * 5 * scale);
        if (pos >= length) break;
        const major = i % 10 === 0;
        const color = pos >= from && pos < to ? "#6fb3e3" : "#d2d2d2";
        if (pos >= 0) box(pos, major ? 0 : 18, 1, major ? 26 : 7, color);
    }
    for (let i = 0; origin + i * 50 * scale < length; i++) {
        const pos = Math.floor(origin + i * 50 * scale);
        const label = vertical
            ? { transform: "translate(12 " + (pos - 1.8) + ") rotate(-90)" }
            : { x: pos + 3.7, y: 12 };
        add(svg, "text", Object.assign(label, { fill: "#222" }), first + i * 50);
    }
}

drawRuler("rulerX", false, 200, 18.7, 1.922, 916, 91, 606);
drawRuler("rulerY", true, 350, 63.4, 1.920, 833, 338, 399);
```
